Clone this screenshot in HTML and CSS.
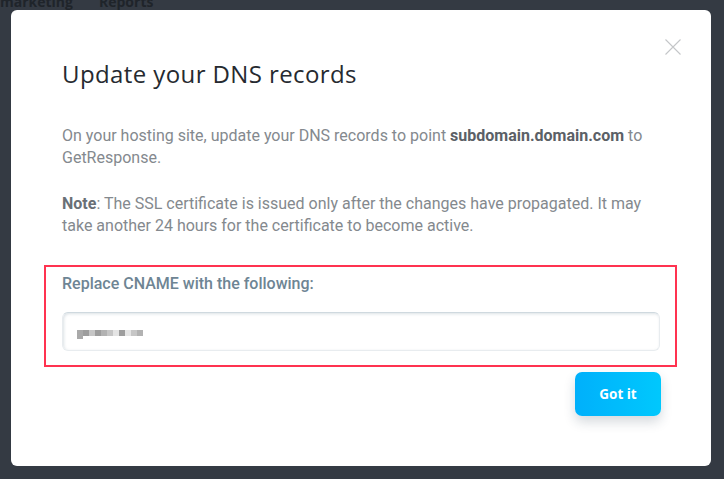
FILE: index.html
```html
<!DOCTYPE html>
<html lang="en">
<head>
<meta charset="utf-8">
<title>Update your DNS records</title>
<link rel="stylesheet" href="styles.css">
</head>
<body>
<nav class="topnav">
  <span class="nav-item">marketing</span>
  <span class="nav-item">Reports</span>
</nav>
<div class="modal">
  <div class="modal-head">
    <h1 class="modal-title">Update your DNS records</h1>
    <button class="close" aria-label="Close">
      <svg width="16" height="16" viewBox="0 0 16 16"><path d="M0.5 0.5 L15.5 15.5 M15.5 0.5 L0.5 15.5" stroke="#c4c6c8" stroke-width="1.1" fill="none"/></svg>
    </button>
  </div>
  <p class="text first">On your hosting site, update your DNS records to point <b class="strong">subdomain.domain.com</b> to GetResponse.</p>
  <p class="text"><b class="note">Note</b>: The SSL certificate is issued only after the changes have propagated. It may take another 24 hours for the certificate to become active.</p>
  <div class="highlight">
    <div class="label">Replace CNAME with the following:</div>
    <div class="field">
      <div class="blur">
        <i class="px a"></i><i class="px b"></i><i class="px c"></i><i class="px b"></i><i class="px d"></i><i class="px c"></i><i class="px e"></i><i class="px b"></i><i class="px e"></i><i class="px c"></i><i class="px d"></i>
      </div>
    </div>
  </div>
  <div class="actions">
    <button class="btn">Got it</button>
  </div>
</div>
</body>
</html>
```

FILE: styles.css
```css
html, body {
  margin: 0;
  padding: 0;
}
body {
  background: #343a43;
  width: 724px;
  height: 479px;
  overflow: hidden;
  font-family: Roboto, "Liberation Sans", sans-serif;
}
.topnav {
  height: 10px;
  overflow: hidden;
  display: flex;
  gap: 26px;
}
.nav-item {
  font-family: "Open Sans", sans-serif;
  font-weight: 700;
  font-size: 14px;
  line-height: 14px;
  color: #1f242a;
  margin-top: -5px;
  display: block;
}
.modal {
  width: 700px;
  height: 456px;
  margin-left: 11px;
  background: #fff;
  border-radius: 6px;
  box-sizing: border-box;
  padding: 48px 51px 0 51px;
  display: flex;
  flex-direction: column;
}
.modal-head {
  display: flex;
  justify-content: space-between;
  align-items: flex-start;
}
.modal-title {
  margin: 0;
  font-family: "Open Sans", sans-serif;
  font-weight: 400;
  font-size: 24px;
  line-height: 32px;
  color: #262a30;
  letter-spacing: 0.4px;
}
.close {
  border: 0;
  background: none;
  padding: 0;
  width: 16px;
  height: 16px;
  margin-top: -19px;
  margin-right: -21px;
  display: block;
}
.close svg { display: block; }
.text {
  margin: 0;
  font-size: 16px;
  line-height: 22px;
  color: #84898e;
}
.text.first { margin-top: 35px; }
.text + .text { margin-top: 24px; }
.strong { color: #5b6066; font-weight: 700; }
.note { color: #6a7076; font-weight: 700; }
.highlight {
  margin: 28px -17px 0 -18px;
  border: 2px solid #ff3350;
  padding: 6px 15px 14px 16px;
}
.label {
  font-size: 16px;
  line-height: 22px;
  font-weight: 500;
  color: #6e8594;
}
.field {
  margin-top: 17px;
  height: 39px;
  box-sizing: border-box;
  border: 1px solid #e8ecef;
  border-top-color: #cfd9df;
  border-radius: 6px;
  box-shadow: inset 1px 1px 3px rgba(110, 135, 150, 0.25);
  display: flex;
  align-items: center;
  padding-left: 14px;
}
.blur {
  display: flex;
  height: 6px;
  margin-top: 2px;
}
.px {
  display: block;
  width: 6px;
  height: 6px;
}
.px.a { background: #a9a9a9; height: 9px; }
.px.b { background: #9d9d9d; }
.px.c { background: #c6c6c6; }
.px.d { background: #b2b2b2; }
.px.e { background: #e4e4e4; }
.actions {
  display: flex;
  justify-content: flex-end;
  margin-top: 5px;
  margin-right: -1px;
}
.btn {
  width: 86px;
  height: 44px;
  border: 0;
  border-radius: 7px;
  background: linear-gradient(90deg, #00b0fb 0%, #00c8fd 100%);
  color: #fff;
  font-family: "Open Sans", sans-serif;
  font-weight: 700;
  font-size: 13.5px;
  box-shadow: 0 6px 12px rgba(30, 50, 70, 0.18);
  padding: 0;
}
```
